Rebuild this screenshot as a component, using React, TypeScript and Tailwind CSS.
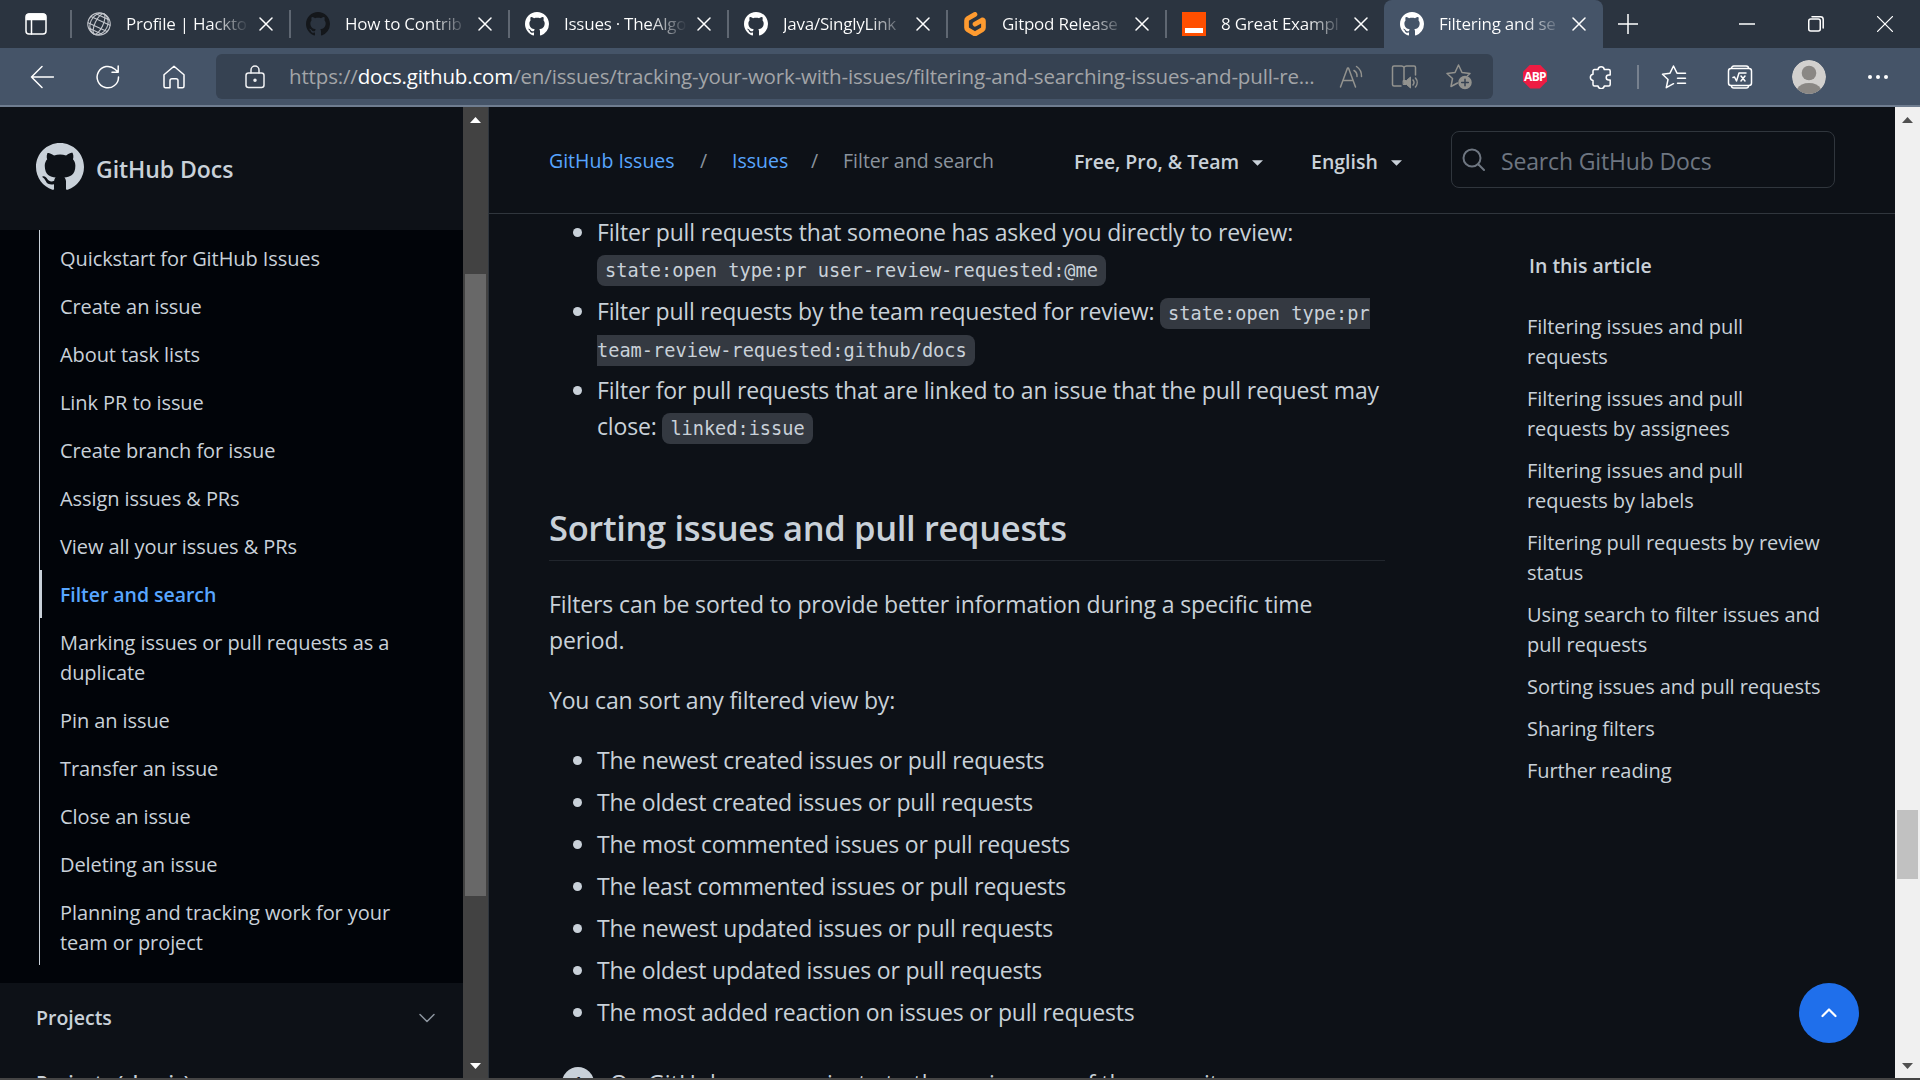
import type { ReactNode } from "react";
import { SiGitpod } from "react-icons/si";

function GitHubMark({ className }: { className: string }) {
  return (
    <svg viewBox="0 0 16 16" fill="currentColor" className={className}>
      <path
        fillRule="evenodd"
        d="M8 0C3.58 0 0 3.58 0 8c0 3.54 2.29 6.53 5.47 7.59.4.07.55-.17.55-.38 0-.19-.01-.82-.01-1.49-2.01.37-2.53-.49-2.69-.94-.09-.23-.48-.94-.82-1.13-.28-.15-.68-.52-.01-.53.63-.01 1.08.58 1.23.82.72 1.21 1.87.87 2.33.66.07-.52.28-.87.51-1.07-1.78-.2-3.64-.89-3.64-3.95 0-.87.31-1.59.82-2.15-.08-.2-.36-1.02.08-2.12 0 0 .67-.21 2.2.82.64-.18 1.32-.27 2-.27.68 0 1.36.09 2 .27 1.53-1.04 2.2-.82 2.2-.82.44 1.1.16 1.92.08 2.12.51.56.82 1.27.82 2.15 0 3.07-1.87 3.75-3.65 3.95.29.25.54.73.54 1.48 0 1.07-.01 1.93-.01 2.2 0 .21.15.46.55.38A8.013 8.013 0 0016 8c0-4.42-3.58-8-8-8z"
      />
    </svg>
  );
}

function Stroke({ className, box = "0 0 24 24", children }: { className: string; box?: string; children: ReactNode }) {
  return (
    <svg
      viewBox={box}
      fill="none"
      stroke="currentColor"
      strokeWidth="1.5"
      strokeLinecap="round"
      strokeLinejoin="round"
      className={className}
    >
      {children}
    </svg>
  );
}

function GlobeIcon() {
  return (
    <Stroke className="size-6 text-[#c3c6cc]">
      <g transform="rotate(25 12 12)" strokeWidth="1.1">
        <circle cx="12" cy="12" r="11.2" />
        <ellipse cx="12" cy="12" rx="4" ry="11.2" />
        <ellipse cx="12" cy="12" rx="8.6" ry="11.2" />
        <path d="M1.5 8.5h21M1.5 15.5h21M5 4h14M5 20h14" />
      </g>
    </Stroke>
  );
}

function TabClose() {
  return (
    <Stroke className="size-[14px] shrink-0 text-white" box="0 0 14 14">
      <path d="M1 1l12 12M13 1L1 13" />
    </Stroke>
  );
}

const tabs: { title: string; icon: ReactNode }[] = [
  { title: "Profile | Hackto", icon: <GlobeIcon /> },
  { title: "How to Contrib", icon: <GitHubMark className="size-6 text-[#14171b]" /> },
  { title: "Issues · TheAlgo", icon: <GitHubMark className="size-6 text-white" /> },
  { title: "Java/SinglyLink", icon: <GitHubMark className="size-6 text-white" /> },
  { title: "Gitpod Release", icon: <SiGitpod className="size-6 text-[#ff9b30]" /> },
  {
    title: "8 Great Exampl",
    icon: (
      <span className="flex h-6 w-6 items-end bg-[#ff4f00] px-[3px] pb-[3px]">
        <span className="h-[5px] w-full bg-white" />
      </span>
    ),
  },
  { title: "Filtering and se", icon: <GitHubMark className="size-6 text-white" /> },
];

function TabStrip() {
  return (
    <div className="flex h-12 shrink-0 items-stretch bg-[#2b3440] text-white">
      <div className="flex w-[70px] items-center pl-[25px]">
        <Stroke className="h-[22px] w-[22px]" box="0 0 22 22">
          <rect x="1" y="1" width="20" height="20" rx="3" />
          <path d="M1.5 4a3 3 0 013-3h13a3 3 0 013 3v2.500h-19z" fill="currentColor" />
          <path d="M6.500 7v14" />
        </Stroke>
      </div>
      {tabs.map((t, i) => {
        const active = i === tabs.length - 1;
        return (
          <div key={t.title} className={active ? "flex w-[219px] rounded-t-lg bg-[#455468]" : "flex w-[219px] items-stretch"}>
            {!active && <div className="my-[10px] w-[2px] bg-[#5f6772]" />}
            <div className={active ? "flex flex-1 items-center pl-4 pr-5" : "flex flex-1 items-center pl-[15px] pr-4"}>
              <div className="flex size-6 shrink-0 items-center justify-center">{t.icon}</div>
              <div className="mb-px ml-[15px] mr-[10px] w-[123px] shrink-0 whitespace-nowrap bg-gradient-to-r from-white from-70% to-transparent bg-clip-text text-[17px] leading-6 tracking-[-0.25px] text-transparent">
                {t.title}
              </div>
              <TabClose />
            </div>
          </div>
        );
      })}
      <div className="flex flex-1 items-center pl-[14px]">
        <Stroke className="mb-px size-[22px]" box="0 0 22 22">
          <path d="M11 1v20M1 11h20" strokeLinecap="butt" />
        </Stroke>
        <div className="mb-px ml-auto flex items-center gap-[53px] pr-[27px]">
          <Stroke className="size-4" box="0 0 16 16">
            <path d="M0 8h16" strokeLinecap="butt" />
          </Stroke>
          <Stroke className="size-4" box="0 0 16 16">
            <rect x="0.750" y="3" width="11.500" height="12" rx="2" />
            <path d="M4 .8h8.500a2.700 2.700 0 012.700 2.700v8.500" />
          </Stroke>
          <Stroke className="size-4" box="0 0 16 16">
            <path d="M.6.6l14.800 14.800M15.400.6L.6 15.400" strokeWidth="1.300" />
          </Stroke>
        </div>
      </div>
    </div>
  );
}

function Toolbar() {
  return (
    <div className="flex h-[59px] shrink-0 items-center border-b-2 border-[#6f7d90] bg-[#455468] text-white">
      <div className="flex w-[216px] items-center gap-[42px] pl-[30px]">
        <Stroke className="size-6">
          <path d="M12 1.500L1.500 12 12 22.500M1.500 12h22" />
        </Stroke>
        <Stroke className="size-6">
          <path d="M22.500 12A10.700 10.700 0 1119 4.200L22 7M22.200 1v6.300H16" />
        </Stroke>
        <Stroke className="size-6">
          <path d="M12 1.200L2 9.800v11.400a1.500 1.500 0 001.500 1.500H8v-7a2 2 0 012-2h4a2 2 0 012 2v7h4.500a1.500 1.500 0 001.500-1.500V9.800z" />
        </Stroke>
      </div>
      <div className="flex h-[45px] w-[1277px] items-center rounded-md bg-[#364252]">
        <Stroke className="ml-[27px] h-6 w-6 text-[#f0f1f3]">
          <rect x="3" y="8" width="18" height="14.500" rx="2.500" />
          <path d="M8 8V5a4 4 0 018 0v3" />
          <circle cx="12" cy="15.200" r="1" fill="currentColor" />
        </Stroke>
        <div className="mb-px ml-[22px] w-[1030px] whitespace-nowrap text-[20.500px] leading-7 tracking-[-0.15px] text-[#a3a5a8]">
          https://<span className="text-white">docs.github.com</span>
          /en/issues/tracking-your-work-with-issues/filtering-and-searching-issues-and-pull-re...
        </div>
        <div className="ml-5 flex items-center text-[#93938f]">
          <Stroke className="h-6 w-6">
            <path d="M1.500 22L8.500 3h1l7 19M4 15.500h10M15 5.500a6.500 6.500 0 013 6M17.500 1.500a11.500 11.500 0 015 10" />
          </Stroke>
          <Stroke className="ml-[28px] h-[26px] w-[27px]" box="0 0 27 26">
            <path d="M10 22H3a1.500 1.500 0 01-1.500-1.500v-17A1.500 1.500 0 013 2h7.500a3 3 0 012.500 1.500A3 3 0 0115.500 2H23a1.500 1.500 0 011.500 1.500V11M13 3.500v14.500" />
            <path d="M12.500 16.500h3l4-3.500v11l-4-3.500h-3z" fill="currentColor" strokeWidth="1" />
            <path d="M22 16a4 4 0 010 5M24.500 14a7 7 0 010 9" />
          </Stroke>
          <Stroke className="ml-[28px] h-[26px] w-[26px]" box="0 0 26 26">
            <path d="M11.500 19L5 22.500l1.500-8L1 9.500l8-1L12.500 1 16 8.500l8 1-2.500 2.300" />
            <circle cx="19" cy="18.500" r="6" fill="currentColor" />
            <path d="M19 15.200v6.600M15.700 18.500h6.600" stroke="#364252" />
          </Stroke>
        </div>
      </div>
      <div className="flex flex-1 items-center">
        <div className="ml-[30px] flex h-6 w-6 items-center justify-center bg-[#ee1c43] text-[12px] font-bold leading-none tracking-[-0.6px] [clip-path:polygon(30%_0,70%_0,100%_30%,100%_70%,70%_100%,30%_100%,0_70%,0_30%)]">
          ABP
        </div>
        <Stroke className="ml-[42px] h-6 w-6">
          <path d="M5.500 4.500H9a3.200 3.200 0 016.300 0h4.400a1.500 1.500 0 011.500 1.500v4h-1.500a2.500 2.500 0 000 5h1.500v4.500a1.500 1.500 0 01-1.500 1.500H15.300a3.200 3.200 0 01-6.300 0H5.500A1.500 1.500 0 014 19.500V15.500a3.200 3.200 0 010-6.300V6a1.500 1.500 0 011.500-1.500z" />
        </Stroke>
        <div className="ml-[24px] h-6 w-[2px] bg-[#77818f]" />
        <Stroke className="ml-[22px] h-6 w-[26px]" box="0 0 26 24">
          <path d="M24.500 8.200H16L12.500 1 9 8.200 1.500 9.300l5.500 5.200-1.700 8.200 7.200-4M16.500 13.200h8M16.500 18.200h8" />
        </Stroke>
        <Stroke className="ml-10 h-6 w-[26px]" box="0 0 26 24">
          <rect x="1.500" y="3.500" width="23" height="17" rx="2.500" />
          <path d="M4.500 3.300a2.300 2.300 0 012.300-2.300h12.400a2.300 2.300 0 012.300 2.300M4.500 20.700A2.300 2.300 0 006.800 23h12.400a2.300 2.300 0 002.300-2.300" />
          <path d="M6 12.500l1.500-.5 2 4 2.500-8h7M14 11l4 5M18 11l-4 5" />
        </Stroke>
        <svg viewBox="0 0 34 34" className="ml-[39px] size-[34px] rounded-full">
          <circle cx="17" cy="17" r="17" fill="#d2d0ce" />
          <circle cx="17" cy="13" r="7.300" fill="#8a8784" />
          <path d="M5 29a13.500 11 0 0124 0A17 17 0 015 29z" fill="#8a8784" />
        </svg>
        <svg viewBox="0 0 20 4" fill="currentColor" className="ml-[42px] h-1 w-5">
          <circle cx="2" cy="2" r="2" />
          <circle cx="10" cy="2" r="2" />
          <circle cx="18" cy="2" r="2" />
        </svg>
      </div>
    </div>
  );
}

function Arrow({ up, className }: { up?: boolean; className: string }) {
  return (
    <svg viewBox="0 0 11 6" fill="currentColor" className={className}>
      <path d={up ? "M5.500 0L11 6H0z" : "M0 0h11L5.500 6z"} />
    </svg>
  );
}

const sidebarItems: string[][] = [
  ["Quickstart for GitHub Issues"],
  ["Create an issue"],
  ["About task lists"],
  ["Link PR to issue"],
  ["Create branch for issue"],
  ["Assign issues & PRs"],
  ["View all your issues & PRs"],
  ["Filter and search"],
  ["Marking issues or pull requests as a", "duplicate"],
  ["Pin an issue"],
  ["Transfer an issue"],
  ["Close an issue"],
  ["Deleting an issue"],
  ["Planning and tracking work for your", "team or project"],
];

function Lines({ lines }: { lines: string[] }) {
  return (
    <>
      {lines.map((l) => (
        <span key={l} className="block whitespace-nowrap">
          {l}
        </span>
      ))}
    </>
  );
}

function Sidebar() {
  return (
    <aside className="flex w-[489px] shrink-0 border-r border-[#30363d]">
      <div className="flex w-[463px] flex-col overflow-hidden text-[#c9d1d9]">
        <div className="flex h-[123px] shrink-0 items-start pl-9 pt-9">
          <GitHubMark className="size-12" />
          <span className="ml-3 mt-2 text-[23px] font-semibold leading-9 tracking-[-0.05px]">GitHub Docs</span>
        </div>
        <nav className="h-[753px] shrink-0 bg-[#010409] pl-[39px]">
          <ul className="h-[735px] border-l border-[#c9d1d9] pt-1 text-[20px] leading-[30px] tracking-[-0.08px]">
            {sidebarItems.map((lines) => (
              <li
                key={lines[0]}
                className={
                  lines[0] === "Filter and search"
                    ? "-ml-px border-l-[3px] border-[#c9d1d9] pb-2 pl-[18px] pt-[10px] text-[19.500px] font-semibold tracking-[-0.05px] text-[#58a6ff]"
                    : "pb-2 pl-5 pt-[10px]"
                }
              >
                <Lines lines={lines} />
              </li>
            ))}
          </ul>
        </nav>
        <div className="flex shrink-0 items-center justify-between pb-5 pl-9 pr-7 pt-5 text-[19.500px] font-semibold leading-[30px]">
          Projects
          <Stroke className="h-[10px] w-4 text-[#8b949e]" box="0 0 16 10">
            <path d="M1 1.500l7 7 7-7" />
          </Stroke>
        </div>
        <div className="shrink-0 pl-9 pt-[15px] text-[19.500px] font-semibold leading-[30px]">Projects (classic)</div>
      </div>
      <div className="flex w-[25px] flex-col items-center bg-[#424242] text-white">
        <Arrow up className="mt-[10px] h-[6px] w-[11px]" />
        <div className="mt-[151px] h-[622px] w-[21px] bg-[#686868]" />
        <Arrow className="mb-[9px] mt-auto h-[6px] w-[11px]" />
      </div>
    </aside>
  );
}

function Caret() {
  return (
    <svg viewBox="0 0 12 6" fill="currentColor" className="ml-[13px] mt-[2px] h-[6px] w-[11px]">
      <path d="M0 0h12L6 6z" />
    </svg>
  );
}

function DocsHeader() {
  return (
    <header className="flex h-[107px] shrink-0 items-start border-b border-[#30363d] pl-[60px] pt-6 text-[#c9d1d9]">
      <div className="mt-[15px] flex w-[525px] whitespace-nowrap text-[19.500px] leading-[30px]">
        <span className="w-[151px] text-[#58a6ff]">GitHub Issues</span>
        <span className="w-8 text-[#8b949e]">/</span>
        <span className="w-[79px] text-[#58a6ff]">Issues</span>
        <span className="w-[32px] text-[#8b949e]">/</span>
        <span className="text-[#8b949e]">Filter and search</span>
      </div>
      <div className="mt-4 flex w-[237px] items-center whitespace-nowrap text-[19.500px] font-semibold leading-[30px] tracking-[-0.05px]">
        Free, Pro, &amp; Team
        <Caret />
      </div>
      <div className="mt-4 flex w-[140px] items-center text-[19.500px] font-semibold leading-[30px]">
        English
        <Caret />
      </div>
      <div className="flex h-[57px] w-[384px] items-center rounded-lg border border-[#30363d] pl-[10px]">
        <Stroke className="h-[23px] w-[23px] text-[#6e7681]" box="0 0 23 23">
          <g strokeWidth="2">
            <circle cx="10" cy="10" r="8.500" />
            <path d="M16.500 16.500L22 22" />
          </g>
        </Stroke>
        <span className="ml-4 mt-[3px] text-[23px] leading-9 tracking-[-0.15px] text-[#6e7681]">Search GitHub Docs</span>
      </div>
    </header>
  );
}

function Bullet({ children, className }: { children: ReactNode; className: string }) {
  return (
    <li className={className}>
      <span className="mr-[15px] mt-[14px] size-[9px] shrink-0 rounded-full bg-[#c9d1d9]" />
      <div className="whitespace-nowrap">{children}</div>
    </li>
  );
}

const sortOptions = [
  "The newest created issues or pull requests",
  "The oldest created issues or pull requests",
  "The most commented issues or pull requests",
  "The least commented issues or pull requests",
  "The newest updated issues or pull requests",
  "The oldest updated issues or pull requests",
  "The most added reaction on issues or pull requests",
];

function Article() {
  return (
    <main className="w-[836px] shrink-0 text-[23px] leading-9 tracking-[-0.17px] text-[#c9d1d9]">
      <ul>
        <Bullet className="flex h-[79px] pl-6">
          Filter pull requests that someone has asked you directly to review:
          <br />
          <code className="rounded-lg bg-[#343941] px-2 py-[5px] font-['DejaVu_Sans_Mono',monospace] text-[18.620px] tracking-normal">
            state:open type:pr user-review-requested:@me
          </code>
        </Bullet>
        <Bullet className="flex h-[79px] pl-6">
          <span className="tracking-[-0.2px]">Filter pull requests by the team requested for review: </span>
          <code className="rounded-lg bg-[#343941] px-2 py-[5px] font-['DejaVu_Sans_Mono',monospace] text-[18.620px] leading-[32px] tracking-normal">
            state:open type:pr
            <br />
            team-review-requested:github/docs
          </code>
        </Bullet>
        <Bullet className="flex h-[79px] pl-6">
          Filter for pull requests that are linked to an issue that the pull request may
          <br />
          close:{" "}
          <code className="rounded-lg bg-[#343941] px-2 py-[5px] font-['DejaVu_Sans_Mono',monospace] text-[18.580px] tracking-normal">
            linked:issue
          </code>
        </Bullet>
      </ul>
      <h2 className="mt-[50px] h-[60px] border-b border-[#21262d] text-[34.500px] font-semibold leading-[54px] tracking-[-0.33px]">
        Sorting issues and pull requests
      </h2>
      <p className="mt-[25px] tracking-[-0.11px]">
        <Lines lines={["Filters can be sorted to provide better information during a specific time", "period."]} />
      </p>
      <p className="mt-6">You can sort any filtered view by:</p>
      <ul className="mt-6 space-y-[6px] tracking-[-0.21px]">
        {sortOptions.map((o) => (
          <Bullet key={o} className="flex pl-6">
            {o}
          </Bullet>
        ))}
      </ul>
      <div className="mt-9 flex pl-[13px]">
        <span className="mt-px flex size-8 shrink-0 items-center justify-center rounded-full bg-[#c9d1d9] text-[18px] font-semibold text-[#0d1117]">
          1
        </span>
        <span className="-mt-px ml-4 whitespace-nowrap tracking-[0.04px]">
          On GitHub.com, navigate to the main page of the repository.
        </span>
      </div>
    </main>
  );
}

const toc: string[][] = [
  ["Filtering issues and pull", "requests"],
  ["Filtering issues and pull", "requests by assignees"],
  ["Filtering issues and pull", "requests by labels"],
  ["Filtering pull requests by review", "status"],
  ["Using search to filter issues and", "pull requests"],
  ["Sorting issues and pull requests"],
  ["Sharing filters"],
  ["Further reading"],
];

function TableOfContents() {
  return (
    <aside className="ml-[142px] pt-[37px] text-[20px] leading-[30px] text-[#c9d1d9]">
      <h3 className="pl-[2px] text-[19.500px] font-semibold">In this article</h3>
      <ul className="mt-[31px] space-y-3 tracking-[-0.08px]">
        {toc.map((lines, i) => (
          <li key={i}>
            <Lines lines={lines} />
          </li>
        ))}
      </ul>
    </aside>
  );
}

export default function App() {
  return (
    <div className="flex h-[1080px] w-[1920px] flex-col overflow-hidden border-b-2 border-[#454545] bg-[#0d1117] font-['Open_Sans',sans-serif]">
      <TabStrip />
      <Toolbar />
      <div className="flex min-h-0 flex-1">
        <Sidebar />
        <div className="relative flex w-[1406px] flex-col overflow-hidden">
          <DocsHeader />
          <div className="flex min-h-0 flex-1 overflow-hidden pl-[60px]">
            <Article />
            <TableOfContents />
          </div>
          <div className="absolute bottom-[35px] right-9 flex size-[60px] items-center justify-center rounded-full bg-[#1f6feb] text-white">
            <Stroke className="h-[10px] w-4" box="0 0 16 10">
              <path d="M1.500 8L8 1.500 14.500 8" strokeWidth="2.200" />
            </Stroke>
          </div>
        </div>
        <div className="flex w-[25px] flex-col items-center bg-[#f0f0f0] text-[#505050]">
          <Arrow up className="mt-[10px] h-[6px] w-[11px]" />
          <div className="mt-[687px] h-[69px] w-[21px] bg-[#c1c1c1]" />
          <Arrow className="mb-[9px] mt-auto h-[6px] w-[11px]" />
        </div>
      </div>
    </div>
  );
}
